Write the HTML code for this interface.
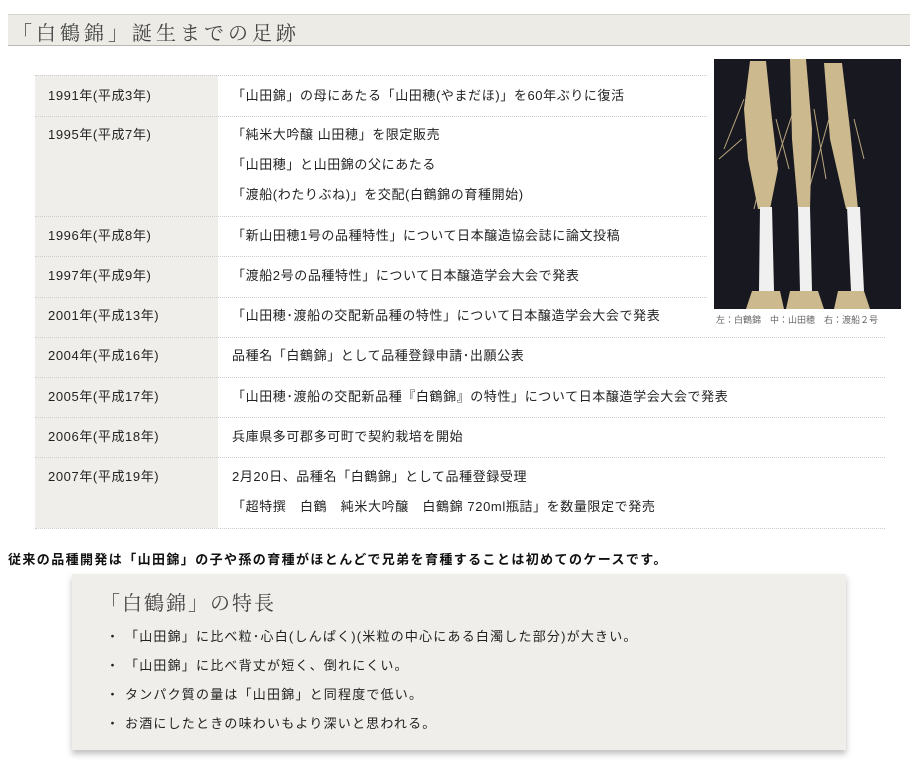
<!DOCTYPE html>
<html><head><meta charset="utf-8"><style>
body{margin:0;width:921px;height:763px;background:#fff;position:relative;font-family:"Liberation Sans","Noto Sans CJK JP",sans-serif;color:#222;overflow:hidden}
.a{position:absolute;white-space:nowrap}
.hd{position:absolute;left:8px;top:14px;width:902px;height:30px;background:#ecebe6;border-top:1px solid #d6d5d0;border-bottom:1px solid #b8b7b2}
.hd span{position:absolute;left:4px;top:2px;font-family:"Noto Serif CJK SC","Liberation Serif",serif;font-size:20px;letter-spacing:4px;color:#444}
.lc{position:absolute;left:35px;width:183px;background:#efeeea}
.ln{position:absolute;left:35px;width:850px;border-top:1px dotted #ccc}
.t{position:absolute;font-size:13px;white-space:nowrap;line-height:16px;letter-spacing:0.6px}
.b{letter-spacing:1.2px}
.box{position:absolute;left:72px;top:574px;width:774px;height:176px;background:#efeeea;box-shadow:0 4px 6px rgba(0,0,0,.25)}
</style></head><body>
<div class="hd"><span>「白鶴錦」誕生までの足跡</span></div>
<div class="lc" style="top:75px;height:453px"></div>
<div class="ln" style="top:75px"></div><div class="ln" style="top:116px"></div><div class="ln" style="top:216px"></div><div class="ln" style="top:256px"></div><div class="ln" style="top:297px"></div><div class="ln" style="top:337px"></div><div class="ln" style="top:377px"></div><div class="ln" style="top:417px"></div><div class="ln" style="top:457px"></div><div class="ln" style="top:528px"></div>
<div class="t" style="left:48px;top:88px">1991年(平成3年)</div>
<div class="t" style="left:232px;top:88px">「山田錦」の母にあたる「山田穂(やまだほ)」を60年ぶりに復活</div>
<div class="t" style="left:48px;top:127px">1995年(平成7年)</div>
<div class="t" style="left:232px;top:127px">「純米大吟醸 山田穂」を限定販売</div>
<div class="t" style="left:232px;top:157px">「山田穂」と山田錦の父にあたる</div>
<div class="t" style="left:232px;top:187px">「渡船(わたりぶね)」を交配(白鶴錦の育種開始)</div>
<div class="t" style="left:48px;top:228px">1996年(平成8年)</div>
<div class="t" style="left:232px;top:228px">「新山田穂1号の品種特性」について日本醸造協会誌に論文投稿</div>
<div class="t" style="left:48px;top:268px">1997年(平成9年)</div>
<div class="t" style="left:232px;top:268px">「渡船2号の品種特性」について日本醸造学会大会で発表</div>
<div class="t" style="left:48px;top:308px">2001年(平成13年)</div>
<div class="t" style="left:232px;top:308px">「山田穂･渡船の交配新品種の特性」について日本醸造学会大会で発表</div>
<div class="t" style="left:48px;top:348px">2004年(平成16年)</div>
<div class="t" style="left:232px;top:348px">品種名「白鶴錦」として品種登録申請･出願公表</div>
<div class="t" style="left:48px;top:389px">2005年(平成17年)</div>
<div class="t" style="left:232px;top:389px">「山田穂･渡船の交配新品種『白鶴錦』の特性」について日本醸造学会大会で発表</div>
<div class="t" style="left:48px;top:429px">2006年(平成18年)</div>
<div class="t" style="left:232px;top:429px">兵庫県多可郡多可町で契約栽培を開始</div>
<div class="t" style="left:48px;top:469px">2007年(平成19年)</div>
<div class="t" style="left:232px;top:469px">2月20日、品種名「白鶴錦」として品種登録受理</div>
<div class="t" style="left:232px;top:499px">「超特撰　白鶴　純米大吟醸　白鶴錦 720ml瓶詰」を数量限定で発売</div>
<div class="a" style="left:708px;top:55px;width:200px;height:274px;background:#fff"></div>
<svg class="a" style="left:714px;top:59px" width="187" height="250" viewBox="0 0 187 250">
<rect width="187" height="250" fill="#181820"/>
<g stroke="#b8a57c" stroke-width="1" fill="none"><path d="M30 40 L10 90 M28 80 L5 100 M62 60 L75 110 M80 50 L60 110 M100 50 L112 120 M115 60 L95 130 M140 60 L150 100 M120 90 L135 150 M52 100 L40 150"/></g>
<g fill="#cdb98e"><path d="M36 2 L52 2 L58 60 L64 110 L56 150 L44 150 L34 100 L30 50Z"/><path d="M76 0 L92 0 L98 70 L96 150 L84 150 L78 80Z"/><path d="M110 4 L128 4 L136 70 L144 150 L132 150 L116 80Z"/>
<path d="M38 232 L66 232 L70 250 L32 250Z"/><path d="M76 232 L104 232 L110 250 L72 250Z"/><path d="M124 232 L150 232 L156 250 L120 250Z"/></g>
<g fill="#f0f0f0"><path d="M46 148 L58 148 L60 232 L45 232Z"/><path d="M84 148 L96 148 L98 232 L86 232Z"/><path d="M133 148 L146 148 L150 232 L137 232Z"/></g>
</svg>
<div class="a" style="left:716px;top:313px;font-size:9px;color:#666">左：白鶴錦　中：山田穂　右：渡船２号</div>
<div class="a" style="left:8px;top:549px;font-size:13px;font-weight:bold;color:#111;letter-spacing:1.4px">従来の品種開発は「山田錦」の子や孫の育種がほとんどで兄弟を育種することは初めてのケースです。</div>
<div class="box"></div>
<div class="a" style="left:100px;top:587px;font-family:'Noto Serif CJK SC','Liberation Serif',serif;font-size:20px;letter-spacing:2px;color:#444">「白鶴錦」の特長</div>
<div class="t b" style="left:106px;top:629px">・ 「山田錦」に比べ粒･心白(しんぱく)(米粒の中心にある白濁した部分)が大きい。</div>
<div class="t b" style="left:106px;top:658px">・ 「山田錦」に比べ背丈が短く、倒れにくい。</div>
<div class="t b" style="left:106px;top:687px">・ タンパク質の量は「山田錦」と同程度で低い。</div>
<div class="t b" style="left:106px;top:716px">・ お酒にしたときの味わいもより深いと思われる。</div>
</body></html>
